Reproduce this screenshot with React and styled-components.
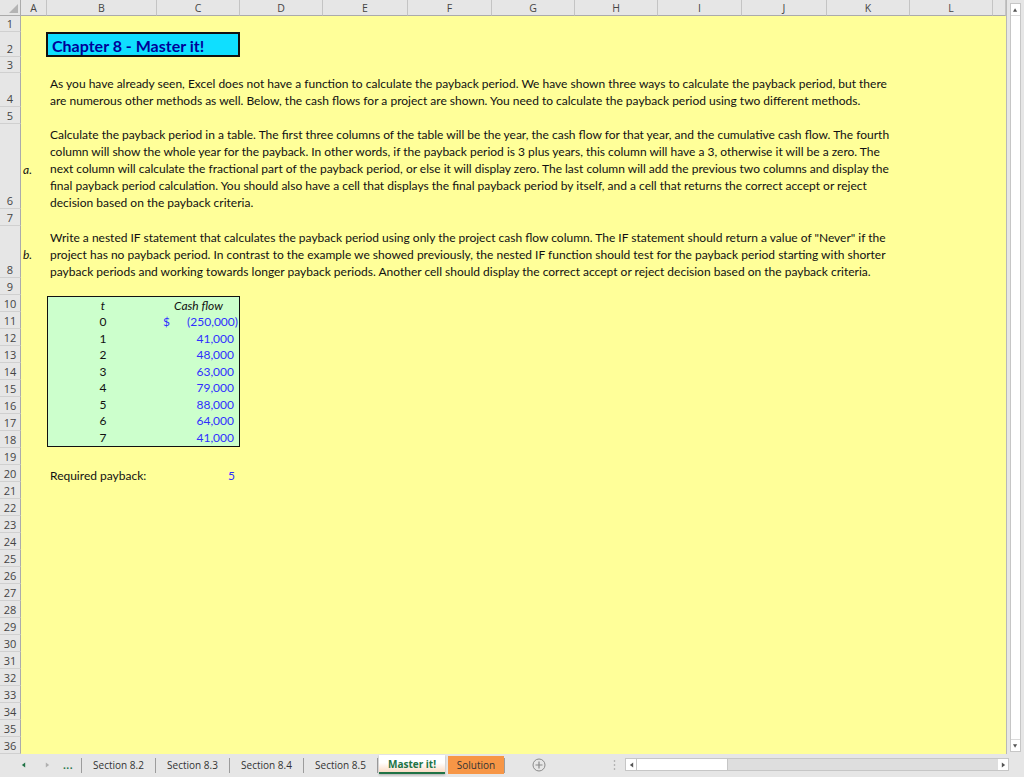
import React from "react";
import styled, { createGlobalStyle } from "styled-components";

const GlobalStyle = createGlobalStyle`
  html, body {
    margin: 0;
    padding: 0;
    overflow: hidden;
    background: #e6e6e6;
  }
`;

const COLS = [21, 26, 110, 83, 83, 85, 84, 83, 83, 84, 85, 83, 83];
const LETTERS = "ABCDEFGHIJKLM".split("");
// header, then rows 1..36
const ROWS = [16, 16, 25, 16, 34, 17, 85, 17, 52, ...Array(28).fill(17)];

const Window = styled.div`
  width: 1024px;
  height: 777px;
  display: flex;
  flex-direction: column;
  background: #e6e6e6;
  font-family: Lato, "Liberation Sans", sans-serif;
`;

const Workspace = styled.div`
  display: flex;
  height: 754px;
`;

const Sheet = styled.div`
  flex: 1;
  display: grid;
  grid-template-columns: ${COLS.map((c) => c + "px").join(" ")} 1fr;
  grid-template-rows: ${ROWS.map((r) => r + "px").join(" ")};
  background: #ffff99;
  overflow: hidden;
  border-right: 1px solid #b9b9b9;
`;

const Corner = styled.div`
  grid-column: 1;
  grid-row: 1;
  background: #e6e6e6;
  border-right: 1px solid #ababab;
  border-bottom: 1px solid #ababab;
  box-sizing: border-box;
  display: flex;
  align-items: flex-end;
  justify-content: flex-end;
  padding: 0 2px 2px 0;
`;

const ColHead = styled.div`
  grid-row: 1;
  grid-column: ${(p) => p.$col};
  background: #e6e6e6;
  border-right: 1px solid #c4c4c4;
  border-bottom: 1px solid #ababab;
  box-sizing: border-box;
  display: flex;
  align-items: center;
  justify-content: center;
  font-family: "Open Sans", "Noto Sans", sans-serif;
  font-size: 10.5px;
  color: #444;
`;

const RowHead = styled.div`
  grid-column: 1;
  grid-row: ${(p) => p.$row};
  background: #e6e6e6;
  border-right: 1px solid #ababab;
  border-bottom: 1px solid #d0d0d0;
  box-sizing: border-box;
  display: flex;
  align-items: flex-end;
  justify-content: center;
  font-family: "Open Sans", "Noto Sans", sans-serif;
  font-size: 11px;
  line-height: 15px;
  color: #444;
`;

const Title = styled.div`
  grid-column: 3 / 5;
  grid-row: 3;
  margin-left: -1px;
  background: #0fdfff;
  border: 2px solid #111;
  box-sizing: border-box;
  display: flex;
  align-items: center;
  padding: 1px 0 0 4px;
  font-size: 16px;
  font-weight: 700;
  color: #000099;
  white-space: nowrap;
`;

const Para = styled.div`
  grid-column: 3 / 14;
  grid-row: ${(p) => p.$row};
  display: flex;
  flex-direction: column;
  justify-content: flex-end;
  margin-bottom: -2px;
  padding-left: 3px;
  font-size: 12px;
  line-height: 17px;
  color: #111;
`;

const Line = styled.span`
  white-space: nowrap;
`;

const Marker = styled.div`
  grid-column: 2;
  grid-row: ${(p) => p.$row};
  display: flex;
  align-items: center;
  padding: 5px 0 0 2px;
  font-size: 12px;
  font-style: italic;
  color: #111;
`;

const CashTable = styled.div`
  grid-column: 3 / 5;
  grid-row: 11 / 20;
  display: grid;
  grid-template-columns: 110px 1fr;
  grid-template-rows: repeat(9, 1fr);
  background: #ccffcc;
  border: 1px solid #111;
  margin: 1px 0 1px 0;
  font-size: 12px;
`;

const YearCell = styled.div`
  display: flex;
  align-items: flex-end;
  justify-content: center;
  line-height: 16px;
  color: #111;
  font-style: ${(p) => (p.$head ? "italic" : "normal")};
`;

const CashCell = styled.div`
  display: flex;
  align-items: flex-end;
  justify-content: ${(p) => (p.$head ? "center" : "space-between")};
  line-height: 16px;
  padding: 0 ${(p) => (p.$neg ? 1 : 5)}px 0 5px;
  color: ${(p) => (p.$head ? "#111" : "#2f2fff")};
  font-style: ${(p) => (p.$head ? "italic" : "normal")};
`;

const Label = styled.div`
  grid-column: ${(p) => p.$col};
  grid-row: ${(p) => p.$row};
  display: flex;
  align-items: flex-end;
  justify-content: ${(p) => (p.$right ? "flex-end" : "flex-start")};
  margin-bottom: -2px;
  padding: 0 ${(p) => (p.$right ? 5 : 0)}px 0 ${(p) => (p.$right ? 0 : 3)}px;
  font-size: 12px;
  line-height: 16px;
  color: ${(p) => p.$color || "#111"};
`;

const VScroll = styled.div`
  width: 17px;
  padding: 3px 3px 2px 3px;
  box-sizing: border-box;
  display: flex;
`;

const VTrack = styled.div`
  flex: 1;
  background: #fff;
  border: 1px solid #c6c6c6;
  display: flex;
  flex-direction: column;
  justify-content: space-between;
`;

const ArrowBox = styled.div`
  height: 11px;
  display: flex;
  align-items: center;
  justify-content: center;
  border-bottom: ${(p) => (p.$top ? "1px solid #dadada" : "none")};
  border-top: ${(p) => (p.$bottom ? "1px solid #dadada" : "none")};
`;

const TabBar = styled.div`
  height: 23px;
  box-sizing: border-box;
  padding-top: 2px;
  display: flex;
  align-items: flex-start;
  background: #e6e6e6;
  font-family: "Open Sans", "Noto Sans", sans-serif;
  font-size: 10px;
  color: #444;
`;

const Nav = styled.div`
  width: 81px;
  height: 18px;
  display: flex;
  align-items: center;
  padding-left: 21px;
  box-sizing: border-box;
`;

const NavBtn = styled.div`
  width: ${(p) => p.$w}px;
  display: flex;
  align-items: center;
  color: #217346;
  font-weight: 700;
  letter-spacing: 0.5px;
`;

const Sep = styled.div`
  width: 1px;
  height: 15px;
  margin-top: 2px;
  background: #9c9c9c;
`;

const Tab = styled.div`
  width: ${(p) => p.$w}px;
  height: ${(p) => (p.$active ? 19 : 18)}px;
  margin-top: ${(p) => (p.$active ? -1 : 0)}px;
  box-sizing: border-box;
  display: flex;
  align-items: center;
  justify-content: center;
  background: ${(p) =>
    p.$active
      ? "linear-gradient(#ffffff 45%, #fbdcc5)"
      : p.$color || "transparent"};
  border-bottom: ${(p) => (p.$active ? "2px solid #217346" : "none")};
  box-shadow: ${(p) => (p.$active ? "0 1px 2px rgba(0,0,0,0.25)" : "none")};
  margin-left: ${(p) => p.$ml || 0}px;
  color: ${(p) => (p.$active ? "#217346" : "#333")};
  font-weight: ${(p) => (p.$active ? 700 : 400)};
`;

const AddSheet = styled.div`
  margin-left: 27px;
  height: 18px;
  display: flex;
  align-items: center;
`;

const Grip = styled.div`
  margin-left: 67px;
  height: 18px;
  display: flex;
  align-items: center;
`;

const HScroll = styled.div`
  margin-left: 9px;
  margin-top: 2px;
  width: 384px;
  height: 13px;
  display: flex;
  border: 1px solid #c6c6c6;
  box-sizing: border-box;
  background: #dedede;
`;

const HArrow = styled.div`
  width: 10px;
  background: #fff;
  display: flex;
  align-items: center;
  justify-content: center;
`;

const Thumb = styled.div`
  width: 90px;
  background: #fff;
  border-left: 1px solid #c6c6c6;
  border-right: 1px solid #c6c6c6;
`;

const Track = styled.div`
  flex: 1;
`;

const Tri = ({ dir, color = "#555", size = 5 }) => {
  const pts = {
    up: "0,5 5,5 2.5,1",
    down: "0,1 5,1 2.5,5",
    left: "5,0 5,6 1,3",
    right: "1,0 1,6 5,3",
  }[dir];
  return (
    <svg width={size} height={6} viewBox="0 0 6 6">
      <polygon points={pts} fill={color} />
    </svg>
  );
};

const para4 = [
  "As you have already seen, Excel does not have a function to calculate the payback period. We have shown three ways to calculate the payback period, but there",
  "are numerous other methods as well. Below, the cash flows for a project are shown. You need to calculate the payback period using two different methods.",
];

const para6 = [
  "Calculate the payback period in a table. The first three columns of the table will be the year, the cash flow for that year, and the cumulative cash flow. The fourth",
  "column will show the whole year for the payback. In other words, if the payback period is 3 plus years, this column will have a 3, otherwise it will be a zero. The",
  "next column will calculate the fractional part of the payback period, or else it will display zero. The last column will add the previous two columns and display the",
  "final payback period calculation. You should also have a cell that displays the final payback period by itself, and a cell that returns the correct accept or reject",
  "decision based on the payback criteria.",
];

const para8 = [
  'Write a nested IF statement that calculates the payback period using only the project cash flow column. The IF statement should return a value of "Never" if the',
  "project has no payback period. In contrast to the example we showed previously, the nested IF function should test for the payback period starting with shorter",
  "payback periods and working towards longer payback periods. Another cell should display the correct accept or reject decision based on the payback criteria.",
];

const flows = [
  [0, "(250,000)"],
  [1, "41,000"],
  [2, "48,000"],
  [3, "63,000"],
  [4, "79,000"],
  [5, "88,000"],
  [6, "64,000"],
  [7, "41,000"],
];

const sections = ["Section 8.2", "Section 8.3", "Section 8.4", "Section 8.5"];

export default function App() {
  return (
    <Window>
      <GlobalStyle />
      <Workspace>
        <Sheet>
          <Corner>
            <svg width="9" height="9" viewBox="0 0 9 9">
              <polygon points="9,0 9,9 0,9" fill="#b4b4b4" />
            </svg>
          </Corner>
          {LETTERS.map((l, i) => (
            <ColHead key={l} $col={i + 2}>
              {l === "M" ? "" : l}
            </ColHead>
          ))}
          {Array.from({ length: 36 }, (_, i) => (
            <RowHead key={i} $row={i + 2}>
              {i + 1}
            </RowHead>
          ))}

          <Title>Chapter 8 - Master it!</Title>

          <Para $row={5}>
            {para4.map((t) => (
              <Line key={t}>{t}</Line>
            ))}
          </Para>

          <Marker $row={7}>a.</Marker>
          <Para $row={7}>
            {para6.map((t) => (
              <Line key={t}>{t}</Line>
            ))}
          </Para>

          <Marker $row={9}>b.</Marker>
          <Para $row={9}>
            {para8.map((t) => (
              <Line key={t}>{t}</Line>
            ))}
          </Para>

          <CashTable>
            <YearCell $head>t</YearCell>
            <CashCell $head>Cash flow</CashCell>
            {flows.map(([y, v]) => (
              <React.Fragment key={y}>
                <YearCell>{y}</YearCell>
                <CashCell $neg={y === 0}>
                  <span>{y === 0 ? "$" : ""}</span>
                  <span>{v}</span>
                </CashCell>
              </React.Fragment>
            ))}
          </CashTable>

          <Label $col={3} $row={21}>
            Required payback:
          </Label>
          <Label $col={4} $row={21} $right $color="#2f2fff">
            5
          </Label>
        </Sheet>
        <VScroll>
          <VTrack>
            <ArrowBox $top>
              <Tri dir="up" />
            </ArrowBox>
            <ArrowBox $bottom>
              <Tri dir="down" />
            </ArrowBox>
          </VTrack>
        </VScroll>
      </Workspace>

      <TabBar>
        <Nav>
          <NavBtn $w={24}>
            <Tri dir="left" color="#217346" />
          </NavBtn>
          <NavBtn $w={18}>
            <Tri dir="right" color="#b0b0b0" />
          </NavBtn>
          <NavBtn $w={16}>...</NavBtn>
        </Nav>
        <Sep />
        {sections.map((s) => (
          <React.Fragment key={s}>
            <Tab $w={73}>{s}</Tab>
            <Sep />
          </React.Fragment>
        ))}
        <Tab $w={66} $ml={1} $active>
          Master it!
        </Tab>
        <Tab $w={56} $ml={3} $color="#f79646">
          Solution
        </Tab>
        <Sep />
        <AddSheet>
          <svg width="14" height="14" viewBox="0 0 14 14">
            <circle cx="7" cy="7" r="6" fill="none" stroke="#8a8a8a" strokeWidth="1" />
            <path d="M7 3.5v7M3.5 7h7" stroke="#8a8a8a" strokeWidth="1.2" />
          </svg>
        </AddSheet>
        <Grip>
          <svg width="3" height="12" viewBox="0 0 3 12">
            <circle cx="1.5" cy="2" r="0.8" fill="#9a9a9a" />
            <circle cx="1.5" cy="6" r="0.8" fill="#9a9a9a" />
            <circle cx="1.5" cy="10" r="0.8" fill="#9a9a9a" />
          </svg>
        </Grip>
        <HScroll>
          <HArrow>
            <Tri dir="left" />
          </HArrow>
          <Thumb />
          <Track />
          <HArrow>
            <Tri dir="right" />
          </HArrow>
        </HScroll>
      </TabBar>
    </Window>
  );
}
